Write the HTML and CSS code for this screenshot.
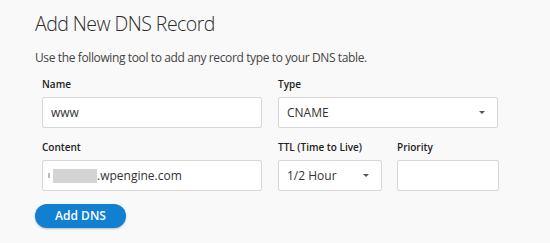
FILE: index.html
```html
<!DOCTYPE html>
<html>
<head>
<meta charset="utf-8">
<link rel="stylesheet" href="styles.css">
</head>
<body>
<div class="page">
  <h1 class="title">Add New DNS Record</h1>
  <p class="desc">Use the following tool to add any record type to your DNS table.</p>
  <div class="form">
    <div class="row">
      <div class="field wide">
        <label class="label">Name</label>
        <div class="input">www</div>
      </div>
      <div class="field wide">
        <label class="label">Type</label>
        <div class="input select">CNAME<span class="caret"></span></div>
      </div>
    </div>
    <div class="row">
      <div class="field wide">
        <label class="label">Content</label>
        <div class="input"><span class="blur1"></span><span class="blur2"></span>.wpengine.com</div>
      </div>
      <div class="field ttl">
        <label class="label">TTL (Time to Live)</label>
        <div class="input select">1/2 Hour<span class="caret"></span></div>
      </div>
      <div class="field prio">
        <label class="label">Priority</label>
        <div class="input"></div>
      </div>
    </div>
  </div>
  <button class="btn">Add DNS</button>
</div>
</body>
</html>
```
FILE: styles.css
```css
html, body { margin: 0; padding: 0; }
body {
  background: #f9f9f9;
  font-family: "Open Sans", "Liberation Sans", sans-serif;
  color: #333;
  width: 550px;
  height: 243px;
  overflow: hidden;
}
.page { padding: 11px 0 0 35px; }
.title {
  margin: 0;
  font-weight: 300;
  font-size: 19.5px;
  line-height: 26px;
  color: #2b2b2b;
  letter-spacing: -0.55px;
}
.desc {
  margin: 13px 0 0 0;
  font-size: 12px;
  line-height: 16px;
  color: #444;
  letter-spacing: -0.38px;
}
.form { margin-left: 7px; margin-top: 11px; }
.row { display: flex; gap: 16px; margin-bottom: 12px; }
.field { display: flex; flex-direction: column; }
.wide { width: 220px; }
.ttl { width: 104px; margin-right: -1px; }
.prio { width: 102px; }
.label {
  font-size: 10px;
  font-weight: 600;
  line-height: 14px;
  color: #222;
  margin-bottom: 6px;
}
.input {
  box-sizing: border-box;
  height: 31px;
  background: #fff;
  border: 1px solid #d6d6d6;
  border-radius: 2px;
  padding: 0 8px;
  font-size: 12px;
  line-height: 29px;
  color: #333;
  display: flex;
  align-items: center;
}
.select { justify-content: space-between; }
.caret {
  width: 0; height: 0;
  border-left: 3.5px solid transparent;
  border-right: 3.5px solid transparent;
  border-top: 3.5px solid #555;
  margin-right: 4px;
}
.blur1 { width: 2px; height: 5px; background: #bbb; margin: 0 3px 0 -3px; }
.blur2 { width: 44px; height: 14px; background: #d4d4d4; }
.btn {
  margin-top: -2px;
  width: 91px;
  height: 24px;
  border: none;
  border-radius: 12px;
  background: #1180d0;
  color: #fff;
  font-family: "Open Sans", "Liberation Sans", sans-serif;
  font-size: 12px;
  font-weight: 600;
  box-shadow: 0 1px 2px rgba(0,0,0,0.25);
  padding: 0;
}
```
